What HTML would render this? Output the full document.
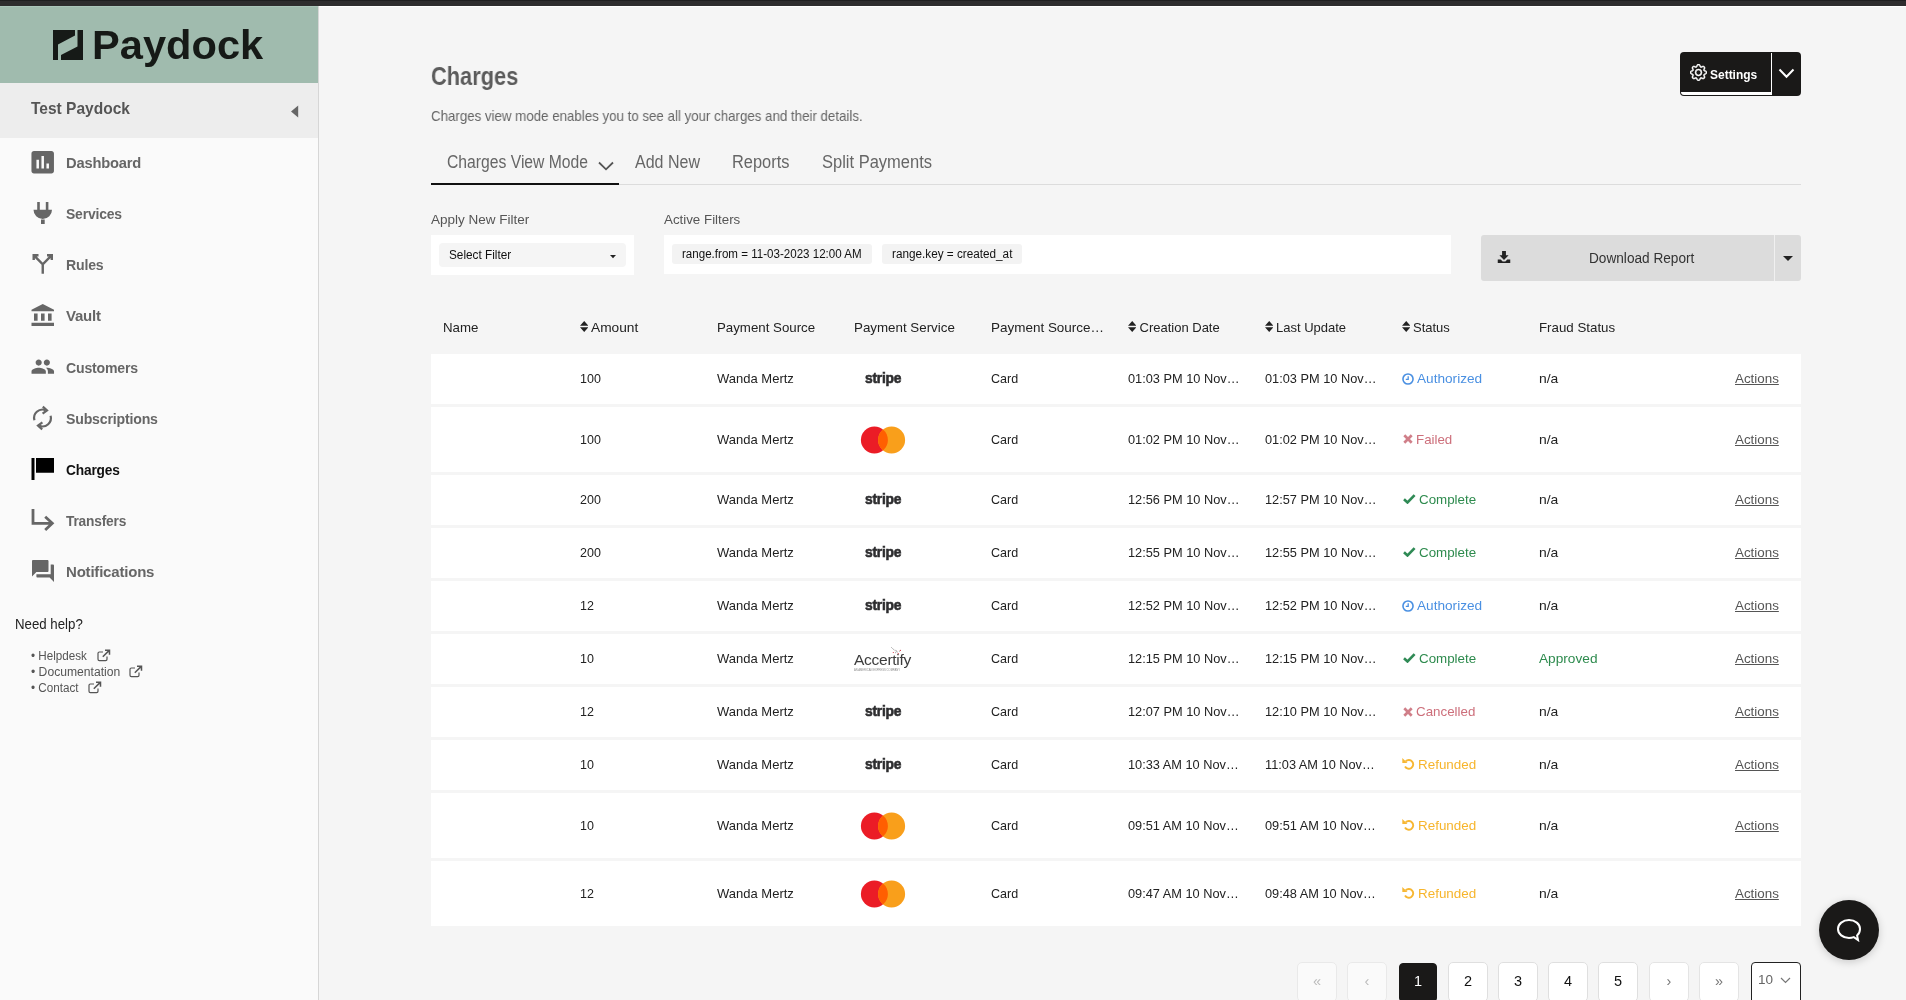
<!DOCTYPE html>
<html lang="en">
<head>
<meta charset="utf-8">
<title>Charges - Paydock</title>
<style>
*{box-sizing:border-box;margin:0;padding:0}
html,body{width:1906px;height:1000px;overflow:hidden}
body{background:#f5f5f5;font-family:"Liberation Sans",sans-serif;color:#222;position:relative}
.abs{position:absolute}
#wrap{position:absolute;left:0;top:0;width:1906px;height:1000px;overflow:hidden;will-change:transform}
.t{position:absolute;white-space:nowrap;line-height:1;transform-origin:0 50%}
#topbar{left:0;top:0;width:1906px;height:6px;background:#2e2d2e;border-top:1px solid #1f1f20}
#topline{left:318px;top:6px;width:1588px;height:1px;background:#fff}
#side{left:0;top:6px;width:319px;height:994px;background:#fafafa;border-right:1px solid #d6d6d6}
#logo{left:0;top:6px;width:318px;height:77px;background:#a0bbae;border-top:1px solid #abc6ba}
#acct{left:0;top:83px;width:318px;height:55px;background:#ededed}
.mi{left:66px;font-size:15px;color:#666;font-weight:bold;letter-spacing:-0.2px}
.mi.on{color:#111}
.hl{font-size:12.5px;color:#555}

.tab{font-size:17.5px;color:#666}
.lbl{font-size:13.5px;color:#555}
.chip{top:243.500px;height:20.500px;background:#f3f3f3;border-radius:3px}
.chipt{top:248px;font-size:12.500px;color:#111}
.th{top:321px;font-size:13px;color:#222}
.sort{top:321.200px;width:8.400px;height:11px;margin-left:-0.200px}
.row{left:431px;width:1370px;background:#fff}
.row .c{top:50%;margin-top:-7px;font-size:13px;color:#222}
.row .act{color:#555;text-decoration:underline}
.si{top:50%}
.st-auth{color:#4a90e2}.st-fail{color:#cd6f7b}.st-ok{color:#2e8b4e}.st-ref{color:#f7b52c}
.ic{left:27px;width:30px;height:30px;fill:#666}
.ic.on{fill:#000}
.ext{width:14px;height:13px}
.row .st-auth{color:#4a90e2}.row .st-fail{color:#cd6f7b}.row .st-ok{color:#2e8b4e}.row .st-ref{color:#f7b52c}
.row .fr-ok{color:#2e8b4e}
.stripe{left:433.5px;top:50%;margin-top:-9px;font-size:15.500px;font-weight:bold;color:#2d2d2f;letter-spacing:-0.300px;-webkit-text-stroke:0.600px #2d2d2f}
.mc{left:429px;top:50%;margin-top:-14px}
.acc{left:423px;top:50%;margin-top:-7px;font-size:15.400px;color:#3c3c3c;letter-spacing:-0.300px}
.acc2{left:423px;top:50%;margin-top:9.500px;font-size:2.800px;color:#8a8a8a}
.pg{top:962px;width:40px;height:40px;background:#fff;border:1px solid #dfdfdf;border-radius:5px;font-size:14.500px;color:#111;text-align:center;line-height:37px}
.pg.dis{background:#fafafa;color:#bbb;border-color:#e9e9e9}
.pg.nx{background:#fff;color:#777;border-color:#e4e4e4}
.pg.cur{background:#1a1918;color:#fff;border-color:#1a1918;width:38px;top:963px;height:39px;border-radius:4px;line-height:34px}
</style>
</head>
<body>
<div id="wrap">
<div id="topbar" class="abs"></div>
<div id="topline" class="abs"></div>
<div id="side" class="abs"></div>
<div id="logo" class="abs">
  <svg class="abs" style="left:53px;top:23px" width="30" height="30" viewBox="0 0 30 30"><path d="M0 0H22V5.5L5 14.5V30H0Z M24.5 0H30V30H8V25L24.5 16.5Z" fill="#161a17"/></svg>
  <div class="t" style="transform:scaleX(1.015);left:92px;top:18px;font-size:41px;font-weight:bold;color:#161a17">Paydock</div>
</div>
<div id="acct" class="abs">
  <div class="t" style="transform:scaleX(0.913);left:31px;top:17px;font-size:17px;font-weight:bold;color:#555">Test Paydock</div>
  <svg class="abs" style="left:290px;top:22px" width="9" height="13" viewBox="0 0 9 13"><path d="M8.200 0.600V12.400L1 6.500Z" fill="#666"/></svg>
</div>
<div id="menu">
  <div class="t mi" style="transform:scaleX(0.980);top:155px">Dashboard</div>
  <div class="t mi" style="transform:scaleX(0.930);top:206px">Services</div>
  <div class="t mi" style="transform:scaleX(0.941);top:257px">Rules</div>
  <div class="t mi" style="top:308px">Vault</div>
  <div class="t mi" style="transform:scaleX(0.940);top:360px">Customers</div>
  <div class="t mi" style="transform:scaleX(0.942);top:411px">Subscriptions</div>
  <div class="t mi on" style="transform:scaleX(0.915);top:462px">Charges</div>
  <div class="t mi" style="transform:scaleX(0.915);top:513px">Transfers</div>
  <div class="t mi" style="top:564px">Notifications</div>
</div>
<div id="icons">
<svg class="abs" id="sideicons" style="left:0;top:0" width="318" height="700" viewBox="0 0 318 700" fill="#666">
  <g transform="translate(27.7,147.2) scale(1.25)"><path d="M19 3H5c-1.100 0-2 .9-2 2v14c0 1.100.9 2 2 2h14c1.100 0 2-.9 2-2V5c0-1.100-.9-2-2-2zM9 17H7v-7h2v7zm4 0h-2V7h2v10zm4 0h-2v-4h2v4z"/></g>
  <path d="M37.200 202h2.600v8h-2.600zM45.800 202h2.600v8h-2.600zM33.500 209.800H52A9.250 9.250 0 0 1 33.500 209.800ZM41 219.500h3.700v4.500H41z"/>
  <path d="M38.500 255.200H33.700V260M33.700 255.200L42.750 264.300L51.800 255.200M47 255.200H51.800V260M42.750 264.300V273.800" fill="none" stroke="#666" stroke-width="2.400"/>
  <path d="M31.500 311.200V309.700L42.750 304L54 309.700V311.200ZM34 313.500h3.600v7.300H34zM41 313.500h3.600v7.300H41zM48 313.500h3.600v7.300H48zM31.500 322.800H54V326H31.500Z"/>
  <g transform="translate(30.5,354.4) scale(1.023)"><path d="M16 11c1.660 0 2.990-1.340 2.990-3S17.660 5 16 5c-1.660 0-3 1.340-3 3s1.340 3 3 3zm-8 0c1.660 0 2.990-1.340 2.990-3S9.660 5 8 5C6.340 5 5 6.340 5 8s1.340 3 3 3zm0 2c-2.330 0-7 1.170-7 3.500V19h14v-2.500c0-2.330-4.670-3.500-7-3.500zm8 0c-.29 0-.62.020-.97.050 1.160.84 1.970 1.970 1.970 3.450V19h6v-2.500c0-2.330-4.670-3.500-7-3.500z"/></g>
  <path d="M34.4 420.2A8.4 8.4 0 0 1 45.4 410.1M50.6 415.8A8.4 8.4 0 0 1 39.6 425.9" fill="none" stroke="#666" stroke-width="2.2"/><path d="M42.8 406.7L47.0 410.4L42.6 413.7" fill="none" stroke="#666" stroke-width="2.2"/><path d="M42.2 429.3L38.0 425.6L42.4 422.3" fill="none" stroke="#666" stroke-width="2.2"/>
  <path d="M31.500 458H34.500V480H31.500ZM36 458H54V472.800H36Z" fill="#000"/>
  <path d="M33 509V523.300H52M45.200 516.800L52.300 523.300L45.200 530" fill="none" stroke="#666" stroke-width="2.800"/>
  <g transform="translate(29.8,557.8) scale(1.1)"><path d="M21 6h-2v9H6v2c0 .55.45 1 1 1h11l4 4V7c0-.55-.45-1-1-1zm-4 6V3c0-.55-.45-1-1-1H3c-.55 0-1 .45-1 1v14l4-4h10c.55 0 1-.45 1-1z"/></g>
</svg>
  <svg class="abs ext" style="left:96.500px;top:648.500px" viewBox="0 0 14 13"><path d="M10 7.500V10.300A1.400 1.400 0 0 1 8.600 11.700H2.400A1.400 1.400 0 0 1 1 10.300V4.400A1.400 1.400 0 0 1 2.400 3H6" fill="none" stroke="#555" stroke-width="1.200"/><path d="M5.800 7.800L12 1.600M8 1.300H12.500V5.800" fill="none" stroke="#555" stroke-width="1.500"/></svg>
  <svg class="abs ext" style="left:129px;top:664.500px" viewBox="0 0 14 13"><path d="M10 7.500V10.300A1.400 1.400 0 0 1 8.600 11.700H2.400A1.400 1.400 0 0 1 1 10.300V4.400A1.400 1.400 0 0 1 2.400 3H6" fill="none" stroke="#555" stroke-width="1.200"/><path d="M5.800 7.800L12 1.600M8 1.300H12.500V5.800" fill="none" stroke="#555" stroke-width="1.500"/></svg>
  <svg class="abs ext" style="left:88px;top:680.500px" viewBox="0 0 14 13"><path d="M10 7.500V10.300A1.400 1.400 0 0 1 8.600 11.700H2.400A1.400 1.400 0 0 1 1 10.300V4.400A1.400 1.400 0 0 1 2.400 3H6" fill="none" stroke="#555" stroke-width="1.200"/><path d="M5.800 7.800L12 1.600M8 1.300H12.500V5.800" fill="none" stroke="#555" stroke-width="1.500"/></svg>
</div>
<div id="help">
  <div class="t" style="transform:scaleX(0.946);left:15px;top:617px;font-size:14px;color:#222">Need help?</div>
  <div class="t hl" style="transform:scaleX(0.933);left:31px;top:650px">• Helpdesk</div>
  <div class="t hl" style="transform:scaleX(0.971);left:31px;top:666px">• Documentation</div>
  <div class="t hl" style="transform:scaleX(0.935);left:31px;top:682px">• Contact</div>
</div>
<div id="main">
  <div class="t" id="title" style="transform:scaleX(0.872);left:431px;top:64px;font-size:25px;font-weight:bold;color:#5c5c5c">Charges</div>
  <div class="t" id="subtitle" style="transform:scaleX(0.917);left:431px;top:109px;font-size:14.5px;color:#666">Charges view mode enables you to see all your charges and their details.</div>

  <div class="abs" id="settings" style="left:1680px;top:52px;width:121px;height:44px;background:#1a1918;border-radius:4px">
    <svg class="abs" style="left:10px;top:12px" width="17" height="17" viewBox="0 0 16 16" stroke="#fff" stroke-width=".45"><path fill="#fff" d="M8 4.754a3.246 3.246 0 1 0 0 6.492 3.246 3.246 0 0 0 0-6.492zM5.754 8a2.246 2.246 0 1 1 4.492 0 2.246 2.246 0 0 1-4.492 0z"/><path fill="#fff" d="M9.796 1.343c-.527-1.79-3.065-1.79-3.592 0l-.094.319a.873.873 0 0 1-1.255.52l-.292-.16c-1.64-.892-3.433.902-2.54 2.541l.159.292a.873.873 0 0 1-.52 1.255l-.319.094c-1.79.527-1.79 3.065 0 3.592l.319.094a.873.873 0 0 1 .52 1.255l-.16.292c-.892 1.64.901 3.434 2.541 2.54l.292-.159a.873.873 0 0 1 1.255.52l.094.319c.527 1.79 3.065 1.79 3.592 0l.094-.319a.873.873 0 0 1 1.255-.52l.292.16c1.64.893 3.434-.902 2.54-2.541l-.159-.292a.873.873 0 0 1 .52-1.255l.319-.094c1.79-.527 1.79-3.065 0-3.592l-.319-.094a.873.873 0 0 1-.52-1.255l.16-.292c.893-1.64-.902-3.433-2.541-2.54l-.292.159a.873.873 0 0 1-1.255-.52l-.094-.319zm-2.633.283c.246-.835 1.428-.835 1.674 0l.094.319a1.873 1.873 0 0 0 2.693 1.115l.291-.16c.764-.415 1.6.42 1.184 1.185l-.159.292a1.873 1.873 0 0 0 1.116 2.692l.318.094c.835.246.835 1.428 0 1.674l-.319.094a1.873 1.873 0 0 0-1.115 2.693l.16.291c.415.764-.42 1.6-1.185 1.184l-.291-.159a1.873 1.873 0 0 0-2.693 1.116l-.094.318c-.246.835-1.428.835-1.674 0l-.094-.319a1.873 1.873 0 0 0-2.692-1.115l-.292.16c-.764.415-1.6-.42-1.184-1.185l.159-.291A1.873 1.873 0 0 0 1.945 8.93l-.319-.094c-.835-.246-.835-1.428 0-1.674l.319-.094A1.873 1.873 0 0 0 3.06 4.377l-.16-.292c-.415-.764.42-1.6 1.185-1.184l.292.159a1.873 1.873 0 0 0 2.692-1.115l.094-.319z"/></svg>
    <div class="t" style="transform:scaleX(0.887);left:30px;top:16px;font-size:13.5px;color:#fff;font-weight:bold">Settings</div>
    <div class="abs" style="left:1px;top:40px;width:91px;height:3px;background:#fff;border-radius:0 0 0 4px"></div>
    <div class="abs" style="left:90.600px;top:1px;width:1.600px;height:42px;background:#fff"></div>
    <svg class="abs" style="left:97.500px;top:16px" width="17" height="11" viewBox="0 0 17 11"><path d="M1.5 1.5L8.5 8.8L15.5 1.5" fill="none" stroke="#fff" stroke-width="2"/></svg>
  </div>

  <div class="t tab" style="transform:scaleX(0.897);left:447px;top:154px">Charges View Mode</div>
  <svg class="abs" style="left:597.700px;top:161px" width="16" height="10" viewBox="0 0 16 10"><path d="M1 1.500L8 8.300L15 1.500" fill="none" stroke="#555" stroke-width="1.800"/></svg>
  <div class="t tab" style="transform:scaleX(0.915);left:635px;top:154px">Add New</div>
  <div class="t tab" style="transform:scaleX(0.937);left:732px;top:154px">Reports</div>
  <div class="t tab" style="transform:scaleX(0.943);left:821.500px;top:154px">Split Payments</div>
  <div class="abs" style="left:431px;top:184px;width:1370px;height:1px;background:#dcdcdc"></div>
  <div class="abs" style="left:431px;top:183px;width:188px;height:2px;background:#111"></div>

  <div class="t lbl" style="left:431px;top:213px">Apply New Filter</div>
  <div class="abs" style="left:431px;top:235px;width:203px;height:40px;background:#fff"></div>
  <div class="abs" style="left:439px;top:243px;width:187px;height:24px;background:#f5f5f5;border-radius:4px"></div>
  <div class="t" style="transform:scaleX(0.906);left:449px;top:248px;font-size:13px;color:#111">Select Filter</div>
  <svg class="abs" style="left:610px;top:254.500px" width="6" height="4" viewBox="0 0 6 4"><path d="M0 0H6L3 3.200Z" fill="#222"/></svg>

  <div class="t lbl" style="transform:scaleX(0.987);left:664px;top:213px">Active Filters</div>
  <div class="abs" style="left:664px;top:235px;width:787px;height:39px;background:#fff"></div>
  <div class="abs chip" style="left:672px;width:200px"></div>
  <div class="t chipt" style="transform:scaleX(0.926);left:682px">range.from = 11-03-2023 12:00 AM</div>
  <div class="abs chip" style="left:882px;width:140px"></div>
  <div class="t chipt" style="transform:scaleX(0.939);left:891.500px">range.key = created_at</div>

  <div class="abs" style="left:1481px;top:235px;width:320px;height:46px;background:#dcdcdc;border-radius:3px"></div>
  <div class="abs" style="left:1774px;top:235px;width:1px;height:46px;background:#f0f0f0"></div>
  <svg class="abs" style="left:1497.300px;top:250.800px" width="14" height="12.500" viewBox="0 0 14 13"><path d="M5 0H9V4.5H11.8L7 9.3L2.2 4.5H5Z" fill="#222"/><path d="M0.5 8.8H3.6L5.6 10.8H8.4L10.4 8.8H13.5V12.5H0.5Z" fill="#222"/></svg>
  <div class="t" style="transform:scaleX(0.974);left:1589px;top:251px;font-size:14px;color:#333">Download Report</div>
  <svg class="abs" style="left:1783px;top:255.800px" width="10" height="5" viewBox="0 0 10 5"><path d="M0 0H10L5 5Z" fill="#222"/></svg>

  <div id="thead">
    <div class="t th" style="transform:scaleX(1.021);left:443px">Name</div>
    <div class="t th" style="transform:scaleX(1.056);left:591px">Amount</div>
    <div class="t th" style="transform:scaleX(1.021);left:717px">Payment Source</div>
    <div class="t th" style="transform:scaleX(1.026);left:854px">Payment Service</div>
    <div class="t th" style="transform:scaleX(1.036);left:991px">Payment Source…</div>
    <div class="t th" style="left:1139.500px">Creation Date</div>
    <div class="t th" style="left:1276px">Last Update</div>
    <div class="t th" style="left:1413px">Status</div>
    <div class="t th" style="transform:scaleX(1.023);left:1539px">Fraud Status</div>
    <svg class="abs sort" style="left:580px"><path d="M0 4.700L4.200 0L8.400 4.700Z M0 6.300H8.400L4.200 11Z" fill="#222"/></svg>
    <svg class="abs sort" style="left:1128px"><path d="M0 4.700L4.200 0L8.400 4.700Z M0 6.300H8.400L4.200 11Z" fill="#222"/></svg>
    <svg class="abs sort" style="left:1265px"><path d="M0 4.700L4.200 0L8.400 4.700Z M0 6.300H8.400L4.200 11Z" fill="#222"/></svg>
    <svg class="abs sort" style="left:1402px"><path d="M0 4.700L4.200 0L8.400 4.700Z M0 6.300H8.400L4.200 11Z" fill="#222"/></svg>
  </div>
  <div id="tbody">
<div class="abs row" style="top:354px;height:50px">
  <div class="t c" style="transform:scaleX(0.962);left:149px">100</div>
  <div class="t c" style="left:286px">Wanda Mertz</div>
  <div class="t stripe" style="transform:scaleX(0.895)">stripe</div>
  <div class="t c" style="transform:scaleX(0.964);left:560px">Card</div>
  <div class="t c" style="transform:scaleX(0.982);left:697px">01:03 PM 10 Nov…</div>
  <div class="t c" style="transform:scaleX(0.982);left:834px">01:03 PM 10 Nov…</div>
  <svg class="abs si" style="left:971px;width:12px;height:12px;margin-top:-6.500px" viewBox="0 0 12 12"><circle cx="6" cy="6" r="5.050" fill="none" stroke="#4a90e2" stroke-width="1.600"/><path d="M6.200 3.200V6.400H3.800" fill="none" stroke="#4a90e2" stroke-width="1.300"/></svg>
  <div class="t c st-auth" style="transform:scaleX(1.048);left:986px">Authorized</div>
  <div class="t c" style="transform:scaleX(1.067);left:1108px">n/a</div>
  <div class="t c act" style="transform:scaleX(1.028);left:1304px">Actions</div>
</div>
<div class="abs row" style="top:407px;height:65px">
  <div class="t c" style="transform:scaleX(0.962);left:149px">100</div>
  <div class="t c" style="left:286px">Wanda Mertz</div>
  <svg class="abs mc" width="46" height="28" viewBox="0 0 46 28"><circle cx="14.400" cy="14" r="13.500" fill="#eb1c26"/><circle cx="31.600" cy="14" r="13.500" fill="#f99f1b"/><path d="M23 3.590A13.500 13.500 0 0 1 23 24.410A13.500 13.500 0 0 1 23 3.590Z" fill="#ff5f01"/></svg>
  <div class="t c" style="transform:scaleX(0.964);left:560px">Card</div>
  <div class="t c" style="transform:scaleX(0.982);left:697px">01:02 PM 10 Nov…</div>
  <div class="t c" style="transform:scaleX(0.982);left:834px">01:02 PM 10 Nov…</div>
  <svg class="abs si" style="left:971.600px;width:10px;height:10px;margin-top:-5.500px" viewBox="0 0 10 10"><path d="M1.300 1.300L8.700 8.700M8.700 1.300L1.300 8.700" fill="none" stroke="#d07f89" stroke-width="2.700"/></svg>
  <div class="t c st-fail" style="transform:scaleX(1.024);left:985.3px">Failed</div>
  <div class="t c" style="transform:scaleX(1.067);left:1108px">n/a</div>
  <div class="t c act" style="transform:scaleX(1.028);left:1304px">Actions</div>
</div>
<div class="abs row" style="top:475px;height:50px">
  <div class="t c" style="transform:scaleX(0.962);left:149px">200</div>
  <div class="t c" style="left:286px">Wanda Mertz</div>
  <div class="t stripe" style="transform:scaleX(0.895)">stripe</div>
  <div class="t c" style="transform:scaleX(0.964);left:560px">Card</div>
  <div class="t c" style="transform:scaleX(0.982);left:697px">12:56 PM 10 Nov…</div>
  <div class="t c" style="transform:scaleX(0.982);left:834px">12:57 PM 10 Nov…</div>
  <svg class="abs si" style="left:971.800px;width:13px;height:10px;margin-top:-6.300px" viewBox="0 0 13 10"><path d="M1 5.200L4.500 8.500L11.600 1.200" fill="none" stroke="#2f8a55" stroke-width="2.600"/></svg>
  <div class="t c st-ok" style="transform:scaleX(1.027);left:988px">Complete</div>
  <div class="t c" style="transform:scaleX(1.067);left:1108px">n/a</div>
  <div class="t c act" style="transform:scaleX(1.028);left:1304px">Actions</div>
</div>
<div class="abs row" style="top:528px;height:50px">
  <div class="t c" style="transform:scaleX(0.962);left:149px">200</div>
  <div class="t c" style="left:286px">Wanda Mertz</div>
  <div class="t stripe" style="transform:scaleX(0.895)">stripe</div>
  <div class="t c" style="transform:scaleX(0.964);left:560px">Card</div>
  <div class="t c" style="transform:scaleX(0.982);left:697px">12:55 PM 10 Nov…</div>
  <div class="t c" style="transform:scaleX(0.982);left:834px">12:55 PM 10 Nov…</div>
  <svg class="abs si" style="left:971.800px;width:13px;height:10px;margin-top:-6.300px" viewBox="0 0 13 10"><path d="M1 5.200L4.500 8.500L11.600 1.200" fill="none" stroke="#2f8a55" stroke-width="2.600"/></svg>
  <div class="t c st-ok" style="transform:scaleX(1.027);left:988px">Complete</div>
  <div class="t c" style="transform:scaleX(1.067);left:1108px">n/a</div>
  <div class="t c act" style="transform:scaleX(1.028);left:1304px">Actions</div>
</div>
<div class="abs row" style="top:581px;height:50px">
  <div class="t c" style="transform:scaleX(0.962);left:149px">12</div>
  <div class="t c" style="left:286px">Wanda Mertz</div>
  <div class="t stripe" style="transform:scaleX(0.895)">stripe</div>
  <div class="t c" style="transform:scaleX(0.964);left:560px">Card</div>
  <div class="t c" style="transform:scaleX(0.982);left:697px">12:52 PM 10 Nov…</div>
  <div class="t c" style="transform:scaleX(0.982);left:834px">12:52 PM 10 Nov…</div>
  <svg class="abs si" style="left:971px;width:12px;height:12px;margin-top:-6.500px" viewBox="0 0 12 12"><circle cx="6" cy="6" r="5.050" fill="none" stroke="#4a90e2" stroke-width="1.600"/><path d="M6.200 3.200V6.400H3.800" fill="none" stroke="#4a90e2" stroke-width="1.300"/></svg>
  <div class="t c st-auth" style="transform:scaleX(1.048);left:986px">Authorized</div>
  <div class="t c" style="transform:scaleX(1.067);left:1108px">n/a</div>
  <div class="t c act" style="transform:scaleX(1.028);left:1304px">Actions</div>
</div>
<div class="abs row" style="top:634px;height:50px">
  <div class="t c" style="transform:scaleX(0.962);left:149px">10</div>
  <div class="t c" style="left:286px">Wanda Mertz</div>
  <div class="t acc" style="transform:scaleX(1.012)">Accertify</div><div class="t acc2" style="transform:scaleX(0.958)">AN AMERICAN EXPRESS COMPANY</div><svg class="abs" style="left:460px;top:13px" width="12" height="10" viewBox="0 0 12 10"><g fill="#555"><circle cx=".4" cy=".4" r=".4"/><circle cx="1.600" cy="1.300" r=".4"/><circle cx="2.800" cy="2.200" r=".45"/><circle cx="4.100" cy="3.200" r=".45"/><circle cx="5.300" cy="4.100" r=".5"/><circle cx="6.200" cy="5" r=".45"/><circle cx="4.700" cy="5.700" r=".45"/><circle cx="8.300" cy="4.600" r=".4"/></g><g fill="#d0202f"><circle cx="9.300" cy="3.400" r=".6"/><circle cx="2.300" cy="5.500" r=".55"/><circle cx="7.200" cy="6.600" r=".6"/></g></svg>
  <div class="t c" style="transform:scaleX(0.964);left:560px">Card</div>
  <div class="t c" style="transform:scaleX(0.982);left:697px">12:15 PM 10 Nov…</div>
  <div class="t c" style="transform:scaleX(0.982);left:834px">12:15 PM 10 Nov…</div>
  <svg class="abs si" style="left:971.800px;width:13px;height:10px;margin-top:-6.300px" viewBox="0 0 13 10"><path d="M1 5.200L4.500 8.500L11.600 1.200" fill="none" stroke="#2f8a55" stroke-width="2.600"/></svg>
  <div class="t c st-ok" style="transform:scaleX(1.027);left:988px">Complete</div>
  <div class="t c fr-ok" style="transform:scaleX(1.051);left:1108px">Approved</div>
  <div class="t c act" style="transform:scaleX(1.028);left:1304px">Actions</div>
</div>
<div class="abs row" style="top:687px;height:50px">
  <div class="t c" style="transform:scaleX(0.962);left:149px">12</div>
  <div class="t c" style="left:286px">Wanda Mertz</div>
  <div class="t stripe" style="transform:scaleX(0.895)">stripe</div>
  <div class="t c" style="transform:scaleX(0.964);left:560px">Card</div>
  <div class="t c" style="transform:scaleX(0.982);left:697px">12:07 PM 10 Nov…</div>
  <div class="t c" style="transform:scaleX(0.982);left:834px">12:10 PM 10 Nov…</div>
  <svg class="abs si" style="left:971.600px;width:10px;height:10px;margin-top:-5.500px" viewBox="0 0 10 10"><path d="M1.300 1.300L8.700 8.700M8.700 1.300L1.300 8.700" fill="none" stroke="#d07f89" stroke-width="2.700"/></svg>
  <div class="t c st-fail" style="transform:scaleX(1.026);left:985px">Cancelled</div>
  <div class="t c" style="transform:scaleX(1.067);left:1108px">n/a</div>
  <div class="t c act" style="transform:scaleX(1.028);left:1304px">Actions</div>
</div>
<div class="abs row" style="top:740px;height:50px">
  <div class="t c" style="transform:scaleX(0.962);left:149px">10</div>
  <div class="t c" style="left:286px">Wanda Mertz</div>
  <div class="t stripe" style="transform:scaleX(0.895)">stripe</div>
  <div class="t c" style="transform:scaleX(0.964);left:560px">Card</div>
  <div class="t c" style="transform:scaleX(0.982);left:697px">10:33 AM 10 Nov…</div>
  <div class="t c" style="transform:scaleX(0.982);left:834px">11:03 AM 10 Nov…</div>
  <svg class="abs si" style="left:971px;width:13px;height:13px;margin-top:-8px" viewBox="0 0 13 13"><path d="M3.700 4.200A4.400 4.400 0 1 1 3 9.600" fill="none" stroke="#f7b733" stroke-width="1.900"/><path d="M0.300 0.900V6.100H5.500Z" fill="#f7b733"/></svg>
  <div class="t c st-ref" style="transform:scaleX(1.033);left:986.5px">Refunded</div>
  <div class="t c" style="transform:scaleX(1.067);left:1108px">n/a</div>
  <div class="t c act" style="transform:scaleX(1.028);left:1304px">Actions</div>
</div>
<div class="abs row" style="top:793px;height:65px">
  <div class="t c" style="transform:scaleX(0.962);left:149px">10</div>
  <div class="t c" style="left:286px">Wanda Mertz</div>
  <svg class="abs mc" width="46" height="28" viewBox="0 0 46 28"><circle cx="14.400" cy="14" r="13.500" fill="#eb1c26"/><circle cx="31.600" cy="14" r="13.500" fill="#f99f1b"/><path d="M23 3.590A13.500 13.500 0 0 1 23 24.410A13.500 13.500 0 0 1 23 3.590Z" fill="#ff5f01"/></svg>
  <div class="t c" style="transform:scaleX(0.964);left:560px">Card</div>
  <div class="t c" style="transform:scaleX(0.982);left:697px">09:51 AM 10 Nov…</div>
  <div class="t c" style="transform:scaleX(0.982);left:834px">09:51 AM 10 Nov…</div>
  <svg class="abs si" style="left:971px;width:13px;height:13px;margin-top:-8px" viewBox="0 0 13 13"><path d="M3.700 4.200A4.400 4.400 0 1 1 3 9.600" fill="none" stroke="#f7b733" stroke-width="1.900"/><path d="M0.300 0.900V6.100H5.500Z" fill="#f7b733"/></svg>
  <div class="t c st-ref" style="transform:scaleX(1.033);left:986.5px">Refunded</div>
  <div class="t c" style="transform:scaleX(1.067);left:1108px">n/a</div>
  <div class="t c act" style="transform:scaleX(1.028);left:1304px">Actions</div>
</div>
<div class="abs row" style="top:861px;height:65px">
  <div class="t c" style="transform:scaleX(0.962);left:149px">12</div>
  <div class="t c" style="left:286px">Wanda Mertz</div>
  <svg class="abs mc" width="46" height="28" viewBox="0 0 46 28"><circle cx="14.400" cy="14" r="13.500" fill="#eb1c26"/><circle cx="31.600" cy="14" r="13.500" fill="#f99f1b"/><path d="M23 3.590A13.500 13.500 0 0 1 23 24.410A13.500 13.500 0 0 1 23 3.590Z" fill="#ff5f01"/></svg>
  <div class="t c" style="transform:scaleX(0.964);left:560px">Card</div>
  <div class="t c" style="transform:scaleX(0.982);left:697px">09:47 AM 10 Nov…</div>
  <div class="t c" style="transform:scaleX(0.982);left:834px">09:48 AM 10 Nov…</div>
  <svg class="abs si" style="left:971px;width:13px;height:13px;margin-top:-8px" viewBox="0 0 13 13"><path d="M3.700 4.200A4.400 4.400 0 1 1 3 9.600" fill="none" stroke="#f7b733" stroke-width="1.900"/><path d="M0.300 0.900V6.100H5.500Z" fill="#f7b733"/></svg>
  <div class="t c st-ref" style="transform:scaleX(1.033);left:986.5px">Refunded</div>
  <div class="t c" style="transform:scaleX(1.067);left:1108px">n/a</div>
  <div class="t c act" style="transform:scaleX(1.028);left:1304px">Actions</div>
</div>
  </div>
  <div id="pager">
    <div class="abs pg dis" style="left:1297px"><span>«</span></div>
    <div class="abs pg dis" style="left:1347px"><span>‹</span></div>
    <div class="abs pg cur" style="left:1399px"><span>1</span></div>
    <div class="abs pg" style="left:1448px"><span>2</span></div>
    <div class="abs pg" style="left:1498px"><span>3</span></div>
    <div class="abs pg" style="left:1548px"><span>4</span></div>
    <div class="abs pg" style="left:1598px"><span>5</span></div>
    <div class="abs pg nx" style="left:1649px"><span>›</span></div>
    <div class="abs pg nx" style="left:1699px"><span>»</span></div>
    <div class="abs" style="left:1751px;top:962px;width:50px;height:42px;background:#fff;border:1px solid #222;border-radius:4px"></div>
    <div class="t" style="left:1758px;top:973px;font-size:13.5px;color:#666">10</div>
    <svg class="abs" style="left:1780px;top:977px" width="11" height="7" viewBox="0 0 11 7"><path d="M1 1L5.500 5.500L10 1" fill="none" stroke="#777" stroke-width="1.200"/></svg>
  </div>
  <div class="abs" id="chat" style="left:1819px;top:900px;width:60px;height:60px;border-radius:50%;background:#1a1918;box-shadow:0 2px 8px rgba(0,0,0,.18)">
    <svg class="abs" style="left:17px;top:18px" width="26" height="24" viewBox="0 0 26 24"><path d="M13 2C6.9 2 2 6 2 11c0 5 4.9 9 11 9 1.7 0 3.3-.3 4.8-.9L22 22l-.9-4.600C23 15.800 24 13.500 24 11c0-5-4.900-9-11-9z" fill="none" stroke="#fff" stroke-width="2"/></svg>
  </div>
</div>

</div>
</body>
</html>
